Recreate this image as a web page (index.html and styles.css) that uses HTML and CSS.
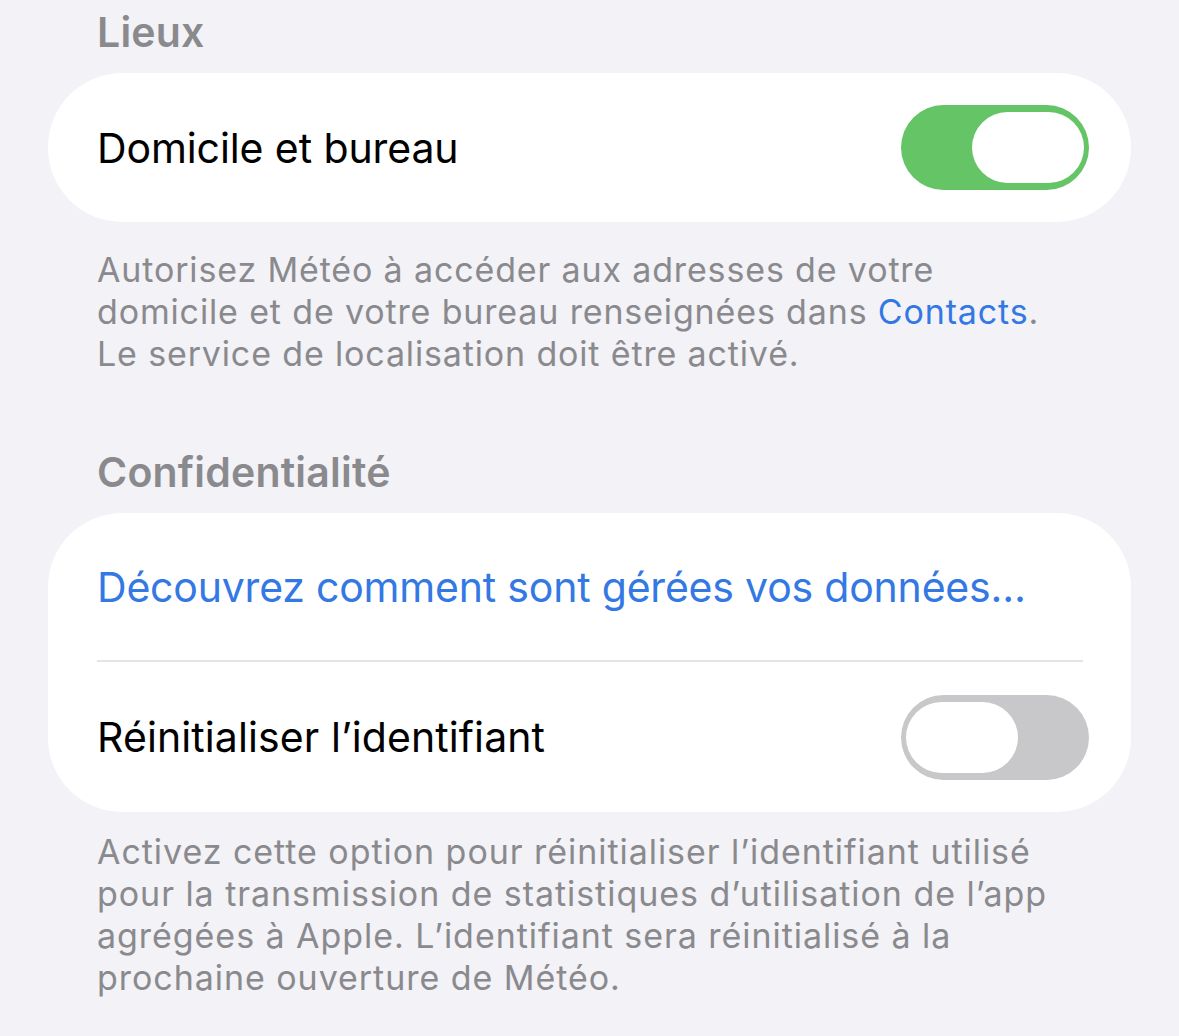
FILE: index.html
```html
<!DOCTYPE html>
<html lang="fr">
<head>
    <meta charset="UTF-8">
    <meta name="viewport" content="width=device-width, initial-scale=1.0">
    <title>Météo</title>
    <link rel="stylesheet" href="styles.css">
</head>
<body>
    <div class="settings">
        <h2 class="section-title">Lieux</h2>
        <div class="group">
            <div class="row">
                <span class="row-label">Domicile et bureau</span>
                <div class="switch switch-on"><div class="switch-knob"></div></div>
            </div>
        </div>
        <p class="section-footer">
            Autorisez Météo à accéder aux adresses de votre<br>
            domicile et de votre bureau renseignées dans <a href="#" class="link">Contacts</a>.<br>
            Le service de localisation doit être activé.
        </p>

        <h2 class="section-title section-title-spaced">Confidentialité</h2>
        <div class="group">
            <div class="row row-first">
                <a href="#" class="row-label link link-row">Découvrez comment sont gérées vos données…</a>
            </div>
            <div class="separator"></div>
            <div class="row row-last">
                <span class="row-label row-label-wide">Réinitialiser l’identifiant</span>
                <div class="switch"><div class="switch-knob"></div></div>
            </div>
        </div>
        <p class="section-footer section-footer-last">
            Activez cette option pour réinitialiser l’identifiant utilisé<br>
            pour la transmission de statistiques d’utilisation de l’app<br>
            agrégées à Apple. L’identifiant sera réinitialisé à la<br>
            prochaine ouverture de Météo.
        </p>
    </div>
</body>
</html>
```

FILE: styles.css
```css
body {
    margin: 0;
    background-color: #f2f2f7;
    font-family: Inter, 'Noto Sans', sans-serif;
    color: #000;
    -webkit-font-smoothing: antialiased;
}
.settings {
    padding: 0 48px;
}
.section-title {
    margin: 0;
    padding: 8px 0 0 49px;
    height: 73px;
    box-sizing: border-box;
    font-size: 41px;
    font-weight: 600;
    letter-spacing: 0.2px;
    color: #8a8a8e;
    line-height: 48px;
}
.section-title-spaced {
    margin-top: 71px;
    padding-top: 2px;
    height: 67px;
}
.group {
    background-color: #fff;
    border-radius: 74px;
    overflow: hidden;
}
.row {
    display: flex;
    align-items: center;
    justify-content: space-between;
    height: 149px;
    padding: 0 42px 0 49px;
}
.row-first {
    height: 147px;
}
.row-last {
    height: 150px;
}
.row-label {
    font-size: 41px;
    line-height: 48px;
    letter-spacing: -0.1px;
}
.row-label-wide {
    letter-spacing: 0.1px;
}
.link {
    color: #3478e4;
    text-decoration: none;
}
.link-row {
    letter-spacing: -0.2px;
}
.separator {
    height: 2px;
    margin: 0 48px 0 49px;
    background-color: #e4e4e7;
}
.section-footer {
    margin: 0;
    padding: 27px 0 0 49px;
    font-size: 34px;
    line-height: 42px;
    letter-spacing: 0.85px;
    color: #8a8a8e;
    white-space: nowrap;
}
.section-footer-last {
    padding-top: 19px;
    letter-spacing: 0.95px;
}
.switch {
    display: flex;
    justify-content: flex-start;
    box-sizing: border-box;
    width: 188px;
    height: 85px;
    padding: 7px 5px;
    border-radius: 43px;
    background-color: #c8c8ca;
}
.switch-on {
    justify-content: flex-end;
    background-color: #65c466;
}
.switch-knob {
    width: 112px;
    height: 71px;
    border-radius: 36px;
    background-color: #fff;
}
```
